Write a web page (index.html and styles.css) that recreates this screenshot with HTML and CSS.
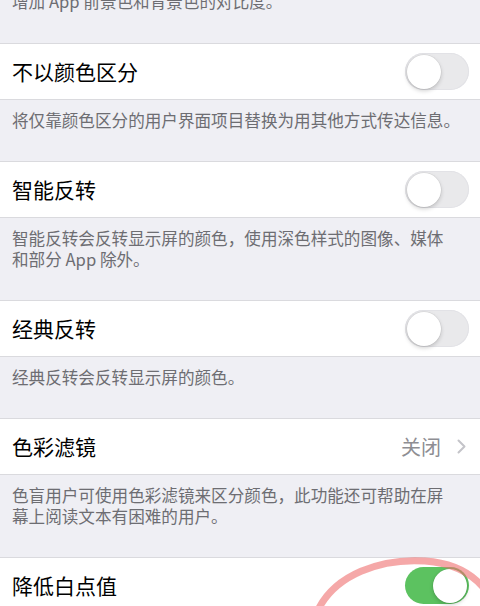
FILE: index.html
```html
<!DOCTYPE html>
<html lang="zh-CN">
<head>
<meta charset="utf-8">
<link rel="stylesheet" href="styles.css">
</head>
<body>
<div class="page">
  <div class="footer first">增加 App 前景色和背景色的对比度。</div>
  <div class="row">
    <span class="title">不以颜色区分</span>
    <span class="switch"><span class="knob"></span></span>
  </div>
  <div class="footer">将仅靠颜色区分的用户界面项目替换为用其他方式传达信息。</div>
  <div class="row">
    <span class="title">智能反转</span>
    <span class="switch"><span class="knob"></span></span>
  </div>
  <div class="footer">智能反转会反转显示屏的颜色，使用深色样式的图像、媒体<br>和部分 App 除外。</div>
  <div class="row">
    <span class="title">经典反转</span>
    <span class="switch"><span class="knob"></span></span>
  </div>
  <div class="footer">经典反转会反转显示屏的颜色。</div>
  <div class="row">
    <span class="title">色彩滤镜</span>
    <span class="detail">关闭
      <svg class="chevron" width="9" height="15" viewBox="0 0 9 15"><path d="M1.5 1.5 L7.5 7.5 L1.5 13.5" fill="none" stroke="#c4c4c9" stroke-width="2" stroke-linecap="round" stroke-linejoin="round"/></svg>
    </span>
  </div>
  <div class="footer">色盲用户可使用色彩滤镜来区分颜色，此功能还可帮助在屏<br>幕上阅读文本有困难的用户。</div>
  <div class="row">
    <span class="title">降低白点值</span>
    <span class="switch on"><span class="knob"></span></span>
  </div>
</div>
<svg class="mark" width="480" height="606" viewBox="0 0 480 606">
  <path d="M318 610 C 335 575, 380 558, 425 561 C 455 563, 478 575, 492 600" fill="none" stroke="rgba(238,110,110,0.6)" stroke-width="7" stroke-linecap="round"/>
</svg>
</body>
</html>
```

FILE: styles.css
```css
html, body {
  margin: 0;
  padding: 0;
}
body {
  width: 480px;
  height: 606px;
  overflow: hidden;
  background: #efeff4;
  font-family: "Noto Sans CJK SC", "Noto Sans", sans-serif;
  position: relative;
}
.page {
  margin-top: -9px;
}
.footer {
  padding: 10px 12px 30px;
  font-size: 16.6px;
  line-height: 21px;
  color: #6d6d72;
  white-space: nowrap;
}
.footer.first {
  padding-top: 0;
  padding-bottom: 31px;
}
.row {
  box-sizing: border-box;
  height: 57px;
  background: #fff;
  border-top: 1px solid #dadade;
  border-bottom: 1px solid #dadade;
  display: flex;
  align-items: center;
  justify-content: space-between;
  padding: 0 11px 0 12px;
}
.title {
  font-size: 21px;
  color: #000;
  line-height: 1;
}
.detail {
  display: flex;
  align-items: center;
  gap: 16px;
  font-size: 20px;
  color: #8e8e93;
  padding-right: 3px;
}
.switch {
  box-sizing: border-box;
  width: 64px;
  height: 37px;
  border-radius: 19px;
  background: #e9e9eb;
  box-shadow: inset 0 0 0 1px #e2e2e6;
  display: flex;
  align-items: center;
  padding: 0 2px;
}
.knob {
  width: 34px;
  height: 34px;
  border-radius: 50%;
  background: #fff;
  box-shadow: 0 2px 4px rgba(0,0,0,0.18), 0 0 0 0.5px rgba(0,0,0,0.08);
}
.switch.on {
  background: #5cc260;
  box-shadow: none;
  justify-content: flex-end;
}
.mark {
  position: absolute;
  left: 0;
  top: 0;
  pointer-events: none;
}
```
